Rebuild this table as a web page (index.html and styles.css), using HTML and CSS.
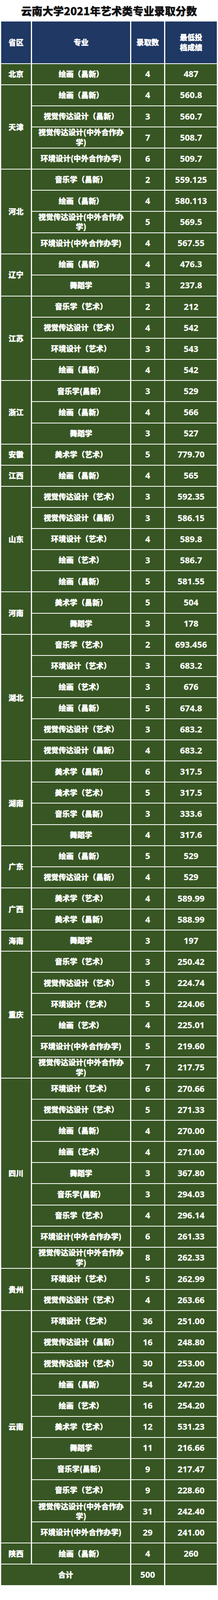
FILE: index.html
```html
<!DOCTYPE html>
<html lang="zh-CN">
<head>
<meta charset="utf-8">
<meta name="viewport" content="width=device-width, initial-scale=1">
<title>云南大学2021年艺术类专业录取分数</title>
<link rel="stylesheet" href="styles.css">
</head>
<body>
<h1 class="title">云南大学2021年艺术类专业录取分数</h1>
<table class="scores">
<colgroup><col class="c-prov"><col class="c-major"><col class="c-count"><col class="c-score"></colgroup>
<thead>
<tr><th>省区</th><th>专业</th><th>录取数</th><th>最低投<br>档成绩</th></tr>
</thead>
<tbody>
<tr><td class="prov">北京</td><td class="major">绘画（昌新）</td><td class="num">4</td><td class="num">487</td></tr>

<tr><td class="prov" rowspan="4">天津</td><td class="major">绘画（昌新）</td><td class="num">4</td><td class="num">560.8</td></tr>
<tr><td class="major">视觉传达设计（昌新）</td><td class="num">3</td><td class="num">560.7</td></tr>
<tr><td class="major">视觉传达设计(中外合作办<br>学)</td><td class="num">7</td><td class="num">508.7</td></tr>
<tr><td class="major">环境设计(中外合作办学)</td><td class="num">6</td><td class="num">509.7</td></tr>

<tr><td class="prov" rowspan="4">河北</td><td class="major">音乐学（昌新）</td><td class="num">2</td><td class="num">559.125</td></tr>
<tr><td class="major">绘画（昌新）</td><td class="num">4</td><td class="num">580.113</td></tr>
<tr><td class="major">视觉传达设计(中外合作办<br>学)</td><td class="num">5</td><td class="num">569.5</td></tr>
<tr><td class="major">环境设计(中外合作办学)</td><td class="num">4</td><td class="num">567.55</td></tr>

<tr><td class="prov" rowspan="2">辽宁</td><td class="major">绘画（昌新）</td><td class="num">4</td><td class="num">476.3</td></tr>
<tr><td class="major">舞蹈学</td><td class="num">3</td><td class="num">237.8</td></tr>

<tr><td class="prov" rowspan="4">江苏</td><td class="major">音乐学（艺术）</td><td class="num">2</td><td class="num">212</td></tr>
<tr><td class="major">视觉传达设计（艺术）</td><td class="num">4</td><td class="num">542</td></tr>
<tr><td class="major">环境设计（艺术）</td><td class="num">3</td><td class="num">543</td></tr>
<tr><td class="major">绘画（昌新）</td><td class="num">4</td><td class="num">542</td></tr>

<tr><td class="prov" rowspan="3">浙江</td><td class="major">音乐学(昌新）</td><td class="num">3</td><td class="num">529</td></tr>
<tr><td class="major">绘画（昌新）</td><td class="num">4</td><td class="num">566</td></tr>
<tr><td class="major">舞蹈学</td><td class="num">3</td><td class="num">527</td></tr>

<tr><td class="prov">安徽</td><td class="major">美术学（艺术）</td><td class="num">5</td><td class="num">779.70</td></tr>

<tr><td class="prov">江西</td><td class="major">绘画（昌新）</td><td class="num">4</td><td class="num">565</td></tr>

<tr><td class="prov" rowspan="5">山东</td><td class="major">视觉传达设计（艺术）</td><td class="num">3</td><td class="num">592.35</td></tr>
<tr><td class="major">视觉传达设计（昌新）</td><td class="num">3</td><td class="num">586.15</td></tr>
<tr><td class="major">环境设计（艺术）</td><td class="num">4</td><td class="num">589.8</td></tr>
<tr><td class="major">绘画（艺术）</td><td class="num">3</td><td class="num">586.7</td></tr>
<tr><td class="major">绘画（昌新）</td><td class="num">5</td><td class="num">581.55</td></tr>

<tr><td class="prov" rowspan="2">河南</td><td class="major">美术学（昌新）</td><td class="num">5</td><td class="num">504</td></tr>
<tr><td class="major">舞蹈学</td><td class="num">3</td><td class="num">178</td></tr>

<tr><td class="prov" rowspan="6">湖北</td><td class="major">音乐学（艺术）</td><td class="num">2</td><td class="num">693.456</td></tr>
<tr><td class="major">环境设计（艺术）</td><td class="num">3</td><td class="num">683.2</td></tr>
<tr><td class="major">绘画（艺术）</td><td class="num">3</td><td class="num">676</td></tr>
<tr><td class="major">绘画（昌新）</td><td class="num">5</td><td class="num">674.8</td></tr>
<tr><td class="major">视觉传达设计（艺术）</td><td class="num">3</td><td class="num">683.2</td></tr>
<tr><td class="major">视觉传达设计（昌新）</td><td class="num">4</td><td class="num">683.2</td></tr>

<tr><td class="prov" rowspan="4">湖南</td><td class="major">美术学（昌新）</td><td class="num">6</td><td class="num">317.5</td></tr>
<tr><td class="major">美术学（艺术）</td><td class="num">5</td><td class="num">317.5</td></tr>
<tr><td class="major">音乐学（昌新）</td><td class="num">3</td><td class="num">333.6</td></tr>
<tr><td class="major">舞蹈学</td><td class="num">4</td><td class="num">317.6</td></tr>

<tr><td class="prov" rowspan="2">广东</td><td class="major">绘画（昌新）</td><td class="num">5</td><td class="num">529</td></tr>
<tr><td class="major">视觉传达设计（昌新）</td><td class="num">4</td><td class="num">529</td></tr>

<tr><td class="prov" rowspan="2">广西</td><td class="major">美术学（艺术）</td><td class="num">4</td><td class="num">589.99</td></tr>
<tr><td class="major">美术学（昌新）</td><td class="num">4</td><td class="num">588.99</td></tr>

<tr><td class="prov">海南</td><td class="major">舞蹈学</td><td class="num">3</td><td class="num">197</td></tr>

<tr><td class="prov" rowspan="6">重庆</td><td class="major">音乐学（艺术）</td><td class="num">3</td><td class="num">250.42</td></tr>
<tr><td class="major">视觉传达设计（艺术）</td><td class="num">5</td><td class="num">224.74</td></tr>
<tr><td class="major">环境设计（艺术）</td><td class="num">5</td><td class="num">224.06</td></tr>
<tr><td class="major">绘画（艺术）</td><td class="num">4</td><td class="num">225.01</td></tr>
<tr><td class="major">环境设计(中外合作办学)</td><td class="num">5</td><td class="num">219.60</td></tr>
<tr><td class="major">视觉传达设计(中外合作办<br>学)</td><td class="num">7</td><td class="num">217.75</td></tr>

<tr><td class="prov" rowspan="9">四川</td><td class="major">环境设计（艺术）</td><td class="num">6</td><td class="num">270.66</td></tr>
<tr><td class="major">视觉传达设计（艺术）</td><td class="num">5</td><td class="num">271.33</td></tr>
<tr><td class="major">绘画（昌新）</td><td class="num">4</td><td class="num">270.00</td></tr>
<tr><td class="major">绘画（艺术）</td><td class="num">4</td><td class="num">271.00</td></tr>
<tr><td class="major">舞蹈学</td><td class="num">3</td><td class="num">367.80</td></tr>
<tr><td class="major">音乐学(昌新）</td><td class="num">3</td><td class="num">294.03</td></tr>
<tr><td class="major">音乐学（艺术）</td><td class="num">4</td><td class="num">296.14</td></tr>
<tr><td class="major">环境设计(中外合作办学)</td><td class="num">6</td><td class="num">261.33</td></tr>
<tr><td class="major">视觉传达设计(中外合作办<br>学)</td><td class="num">8</td><td class="num">262.33</td></tr>

<tr><td class="prov" rowspan="2">贵州</td><td class="major">环境设计（艺术）</td><td class="num">5</td><td class="num">262.99</td></tr>
<tr><td class="major">视觉传达设计（艺术）</td><td class="num">4</td><td class="num">263.66</td></tr>

<tr><td class="prov" rowspan="11">云南</td><td class="major">环境设计（艺术）</td><td class="num">36</td><td class="num">251.00</td></tr>
<tr><td class="major">视觉传达设计（昌新）</td><td class="num">16</td><td class="num">248.80</td></tr>
<tr><td class="major">视觉传达设计（艺术）</td><td class="num">30</td><td class="num">253.00</td></tr>
<tr><td class="major">绘画（昌新）</td><td class="num">54</td><td class="num">247.20</td></tr>
<tr><td class="major">绘画（艺术）</td><td class="num">16</td><td class="num">254.20</td></tr>
<tr><td class="major">美术学（艺术）</td><td class="num">12</td><td class="num">531.23</td></tr>
<tr><td class="major">舞蹈学</td><td class="num">11</td><td class="num">216.66</td></tr>
<tr><td class="major">音乐学(昌新）</td><td class="num">9</td><td class="num">217.47</td></tr>
<tr><td class="major">音乐学（艺术）</td><td class="num">9</td><td class="num">228.60</td></tr>
<tr><td class="major">视觉传达设计(中外合作办<br>学)</td><td class="num">31</td><td class="num">242.40</td></tr>
<tr><td class="major">环境设计(中外合作办学)</td><td class="num">29</td><td class="num">241.00</td></tr>

<tr><td class="prov">陕西</td><td class="major">绘画（昌新）</td><td class="num">4</td><td class="num">260</td></tr>

<tr><td class="prov" colspan="2">合计</td><td class="num">500</td><td class="num"></td></tr>
</tbody>
</table>
</body>
</html>
```

FILE: styles.css
```css
/* the page is drawn on a 558 x 4951 unit grid that follows the window */
:root {
  --u: calc(100vw / 558);
  --v: calc(100vh / 4951);
  --f: calc((var(--u) + var(--v)) / 2);
}

html, body {
  overflow: hidden;
}

body {
  margin: 0;
  background: #ffffff;
  font-family: "Noto Sans CJK SC", "Noto Sans", sans-serif;
}

.title {
  margin: 0;
  height: calc(64 * var(--v));
  line-height: calc(66 * var(--v));
  text-align: center;
  font-size: calc(30 * var(--f));
  font-weight: 900;
  color: #111111;
  white-space: nowrap;
  -webkit-text-stroke: calc(0.6 * var(--f)) #111111;
}

.scores {
  width: 100%;
  table-layout: fixed;
  border-collapse: separate;
  border-spacing: calc(3 * var(--u)) calc(3 * var(--v));
}

.c-prov { width: calc(76 * var(--u)); }
.c-major { width: calc(251 * var(--u)); }
.c-count { width: calc(84 * var(--u)); }
.c-score { width: calc(132 * var(--u)); }

.scores th {
  height: calc(129 * var(--v));
  padding: 0;
  background: #1f3864;
  color: #ffffff;
  font-size: calc(21 * var(--f));
  font-weight: 900;
  line-height: calc(32 * var(--v));
  text-align: center;
  vertical-align: middle;
  -webkit-text-stroke: calc(0.5 * var(--f)) #ffffff;
}

.scores td {
  height: calc(63 * var(--v));
  padding: 0;
  background: #375623;
  color: #ffffff;
  text-align: center;
  vertical-align: middle;
}

.scores .prov {
  font-size: calc(21 * var(--f));
  font-weight: 900;
  line-height: calc(30 * var(--v));
  -webkit-text-stroke: calc(0.5 * var(--f)) #ffffff;
}

.scores .major {
  font-size: calc(21 * var(--f));
  font-weight: 900;
  line-height: calc(31 * var(--v));
  white-space: nowrap;
  -webkit-text-stroke: calc(0.5 * var(--f)) #ffffff;
}

.scores .num {
  font-family: "Open Sans", "Noto Sans", sans-serif;
  font-size: calc(24 * var(--f));
  font-weight: 700;
  line-height: calc(30 * var(--v));
  -webkit-text-stroke: calc(0.3 * var(--f)) #ffffff;
}
```
